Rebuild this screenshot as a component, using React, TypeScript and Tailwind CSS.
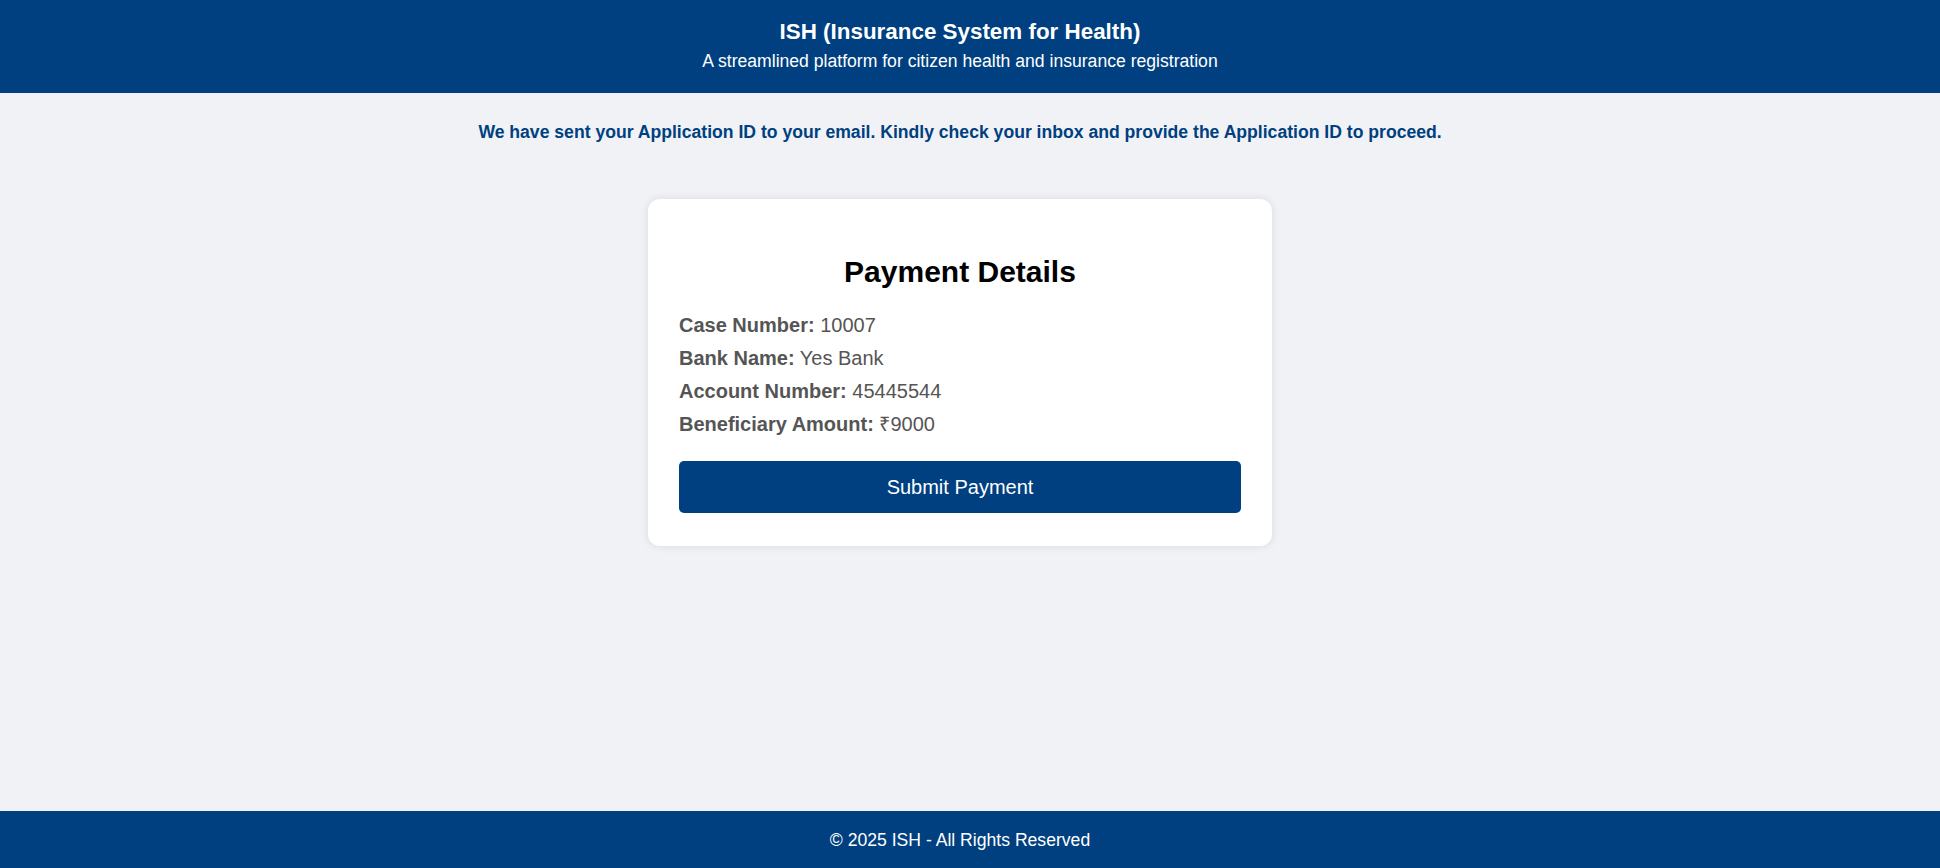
import React from 'react';

const rows = [
  { label: 'Case Number:', value: '10007' },
  { label: 'Bank Name:', value: 'Yes Bank' },
  { label: 'Account Number:', value: '45445544' },
  { label: 'Beneficiary Amount:', value: '₹9000' },
];

export default function App() {
  return (
    <div className="min-h-screen flex flex-col bg-[#f0f2f5] font-['Liberation_Sans',Arial,sans-serif]">
      {/* Header */}
      <header className="bg-[#004080] text-white pt-[19px] pb-[22px] pr-[20px] flex flex-col items-center gap-[6px]">
        <h1 className="text-[22.4px] leading-[26px] font-bold">ISH (Insurance System for Health)</h1>
        <p className="text-[17.6px] leading-[20px]">A streamlined platform for citizen health and insurance registration</p>
      </header>

      <main className="flex-1 flex flex-col items-center pr-[20px]">
        <p className="mt-[29px] text-[17.6px] leading-[20px] font-bold text-[#004080]">
          We have sent your Application ID to your email. Kindly check your inbox and provide the Application ID to proceed.
        </p>

        {/* Payment card */}
        <div className="mt-[57px] w-[624px] bg-white rounded-[12px] shadow-[0_0_10px_rgba(0,0,0,0.1)] px-[31px] pt-[31px] pb-[33px]">
          <h2 className="mt-[24px] mb-[24px] text-center text-[30px] leading-[36px] font-bold text-black">Payment Details</h2>
          <div className="flex flex-col gap-[10px]">
            {rows.map((r) => (
              <p key={r.label} className="text-[20px] leading-[23px] text-[#555]">
                <span className="font-bold">{r.label}</span> {r.value}
              </p>
            ))}
          </div>
          <button className="mt-[25px] w-full h-[52px] bg-[#004080] text-white text-[20px] rounded-[5px]">
            Submit Payment
          </button>
        </div>
      </main>

      {/* Footer */}
      <footer className="h-[57px] bg-[#004080] text-white pr-[20px] flex items-center justify-center">
        <p className="text-[17.6px] leading-[20px]">© 2025 ISH - All Rights Reserved</p>
      </footer>
    </div>
  );
}
